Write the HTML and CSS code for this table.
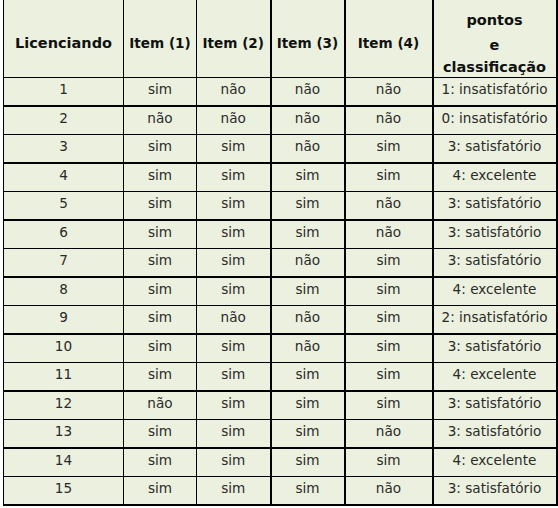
FILE: index.html
```html
<!DOCTYPE html>
<html>
<head>
<meta charset="utf-8">
<link rel="stylesheet" href="styles.css">
</head>
<body>
<table class="grid">
  <colgroup>
    <col class="c1"><col class="c2"><col class="c3"><col class="c4"><col class="c5"><col class="c6">
  </colgroup>
  <thead>
    <tr>
      <th class="wide">Licenciando</th>
      <th>Item (1)</th>
      <th>Item (2)</th>
      <th>Item (3)</th>
      <th>Item (4)</th>
      <th class="score-head"><div class="l1">pontos</div><div class="l2">e</div><div class="l3">classificação</div></th>
    </tr>
  </thead>
  <tbody>
    <tr><td>1</td><td>sim</td><td>não</td><td>não</td><td>não</td><td>1: insatisfatório</td></tr>
    <tr class="thick"><td>2</td><td>não</td><td>não</td><td>não</td><td>não</td><td>0: insatisfatório</td></tr>
    <tr><td>3</td><td>sim</td><td>sim</td><td>não</td><td>sim</td><td>3: satisfatório</td></tr>
    <tr class="thick"><td>4</td><td>sim</td><td>sim</td><td>sim</td><td>sim</td><td>4: excelente</td></tr>
    <tr><td>5</td><td>sim</td><td>sim</td><td>sim</td><td>não</td><td>3: satisfatório</td></tr>
    <tr class="thick"><td>6</td><td>sim</td><td>sim</td><td>sim</td><td>não</td><td>3: satisfatório</td></tr>
    <tr><td>7</td><td>sim</td><td>sim</td><td>não</td><td>sim</td><td>3: satisfatório</td></tr>
    <tr class="thick"><td>8</td><td>sim</td><td>sim</td><td>sim</td><td>sim</td><td>4: excelente</td></tr>
    <tr><td>9</td><td>sim</td><td>não</td><td>não</td><td>sim</td><td>2: insatisfatório</td></tr>
    <tr class="thick"><td>10</td><td>sim</td><td>sim</td><td>não</td><td>sim</td><td>3: satisfatório</td></tr>
    <tr><td>11</td><td>sim</td><td>sim</td><td>sim</td><td>sim</td><td>4: excelente</td></tr>
    <tr class="thick"><td>12</td><td>não</td><td>sim</td><td>sim</td><td>sim</td><td>3: satisfatório</td></tr>
    <tr><td>13</td><td>sim</td><td>sim</td><td>sim</td><td>não</td><td>3: satisfatório</td></tr>
    <tr class="thick"><td>14</td><td>sim</td><td>sim</td><td>sim</td><td>sim</td><td>4: excelente</td></tr>
    <tr><td>15</td><td>sim</td><td>sim</td><td>sim</td><td>não</td><td>3: satisfatório</td></tr>
  </tbody>
</table>
</body>
</html>
```
FILE: styles.css
```css
html, body {
  margin: 0;
  padding: 0;
  background: #ffffff;
}

.grid {
  margin-left: 3px;
  border-collapse: collapse;
  table-layout: fixed;
  width: 553px;
  background: #ebf1de;
  font-family: "DejaVu Sans", "Liberation Sans", sans-serif;
  border-right: 2px solid #000;
  border-bottom: 2px solid #000;
  border-left: 1px solid #000;
}

.c1 { width: 120px; }
.c2 { width: 73px; }
.c3 { width: 74px; }
.c4 { width: 74px; }
.c5 { width: 88px; }
.c6 { width: 124px; }

.grid th,
.grid td {
  border-left: 1px solid #000;
  border-right: 1px solid #000;
  text-align: center;
  padding: 0;
  white-space: nowrap;
}

.grid th:nth-child(4),
.grid td:nth-child(4),
.grid th:nth-child(5),
.grid td:nth-child(5),
.grid th:nth-child(6),
.grid td:nth-child(6) {
  border-left: 2px solid #000;
}

.grid th {
  height: 77px;
  font-size: 13.6px;
  font-weight: bold;
  color: #111;
  padding-top: 8px;
  padding-bottom: 0;
  border-bottom: 1px solid #000;
  vertical-align: middle;
  box-sizing: border-box;
}

.grid th.wide {
  font-size: 14.5px;
}

.score-head .l1 { line-height: 25px; font-size: 14.5px; }
.score-head .l2 { line-height: 24px; font-size: 14.5px; }
.score-head .l3 { line-height: 20px; font-size: 14.5px; }

.grid td {
  height: 28px;
  font-size: 13.6px;
  color: #2a2a2a;
  vertical-align: middle;
  padding-bottom: 5px;
  box-sizing: border-box;
  border-bottom: 1px solid #000;
}

.grid tr.thick td {
  height: 29px;
  border-top: 2px solid #000;
}
```
